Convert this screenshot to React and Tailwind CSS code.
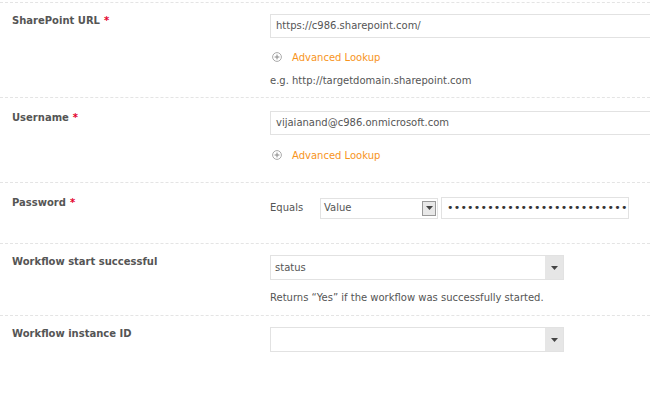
import { useState } from 'react';

const Arrow = () => (
    <svg width="7" height="4" viewBox="0 0 7 4"><path d="M0 0h7L3.5 4z" fill="#444" /></svg>
);

const Plus = () => (
    <svg width="10" height="10" viewBox="0 0 10 10" className="shrink-0 -mt-[3px]">
        <circle cx="5" cy="5" r="4.4" fill="none" stroke="#aaa" strokeWidth="1" />
        <path d="M5 2.6v4.8M2.6 5h4.8" stroke="#888" strokeWidth="1" />
    </svg>
);

const Lookup = ({ top = 'mt-[13px]' }) => (
    <div className={`flex items-center gap-[10px] pl-[2px] ${top}`}>
        <Plus />
        <span className="text-[#f7941d]">Advanced Lookup</span>
    </div>
);

const Label = ({ children, required }) => (
    <div className="w-[270px] shrink-0 pl-[12px] font-bold text-[#555]">
        {children}
        {required && <span className="text-[#e4002b] ml-[4px]">*</span>}
    </div>
);

const Select = ({ value }) => (
    <div className="w-[294px] h-[25px] flex border border-[#e2e2e2] bg-white">
        <div className="flex-1 px-[4px] flex items-center text-[#555]">{value}</div>
        <div className="w-[18px] bg-[#e6e6e6] flex items-center justify-center"><Arrow /></div>
    </div>
);

const App = () => {
    const [url] = useState('https://c986.sharepoint.com/');

    return (
        <div className="w-[650px] h-[397px] bg-white overflow-hidden text-[10px] leading-[14px] text-[#555] font-['Verdana','DejaVu_Sans',sans-serif]">
            <div className="mt-[2px] border-t border-dashed border-[#e4e4e4]" />

            {/* SharePoint URL */}
            <div className="flex pt-[11px] pb-[9px] border-b border-dashed border-[#e4e4e4]">
                <Label required>SharePoint URL</Label>
                <div className="flex-1">
                    <div className="h-[24px] -mr-[20px] border border-[#e2e2e2] flex items-center px-[5px]">{url}</div>
                    <Lookup />
                    <div className="mt-[9px]">e.g. http://targetdomain.sharepoint.com</div>
                </div>
            </div>

            {/* Username */}
            <div className="flex pt-[13px] pb-[19px] border-b border-dashed border-[#e4e4e4]">
                <Label required>Username</Label>
                <div className="flex-1">
                    <div className="h-[24px] -mr-[20px] border border-[#e2e2e2] flex items-center px-[5px]">vijaianand@c986.onmicrosoft.com</div>
                    <Lookup top="mt-[14px]" />
                </div>
            </div>

            {/* Password */}
            <div className="flex pt-[13px] pb-[24px] border-b border-dashed border-[#e4e4e4]">
                <Label required>Password</Label>
                <div className="flex items-center mt-[1px]">
                    <span className="w-[50px]">Equals</span>
                    <div className="w-[118px] h-[21px] flex items-center border border-[#e2e2e2] pl-[3px] pr-[1px]">
                        <span className="flex-1">Value</span>
                        <div className="w-[14px] h-[15px] bg-[#e8e8e8] border border-[#999] flex items-center justify-center"><Arrow /></div>
                    </div>
                    <div className="w-[188px] h-[22px] ml-[3px] border border-[#e2e2e2] flex items-center px-[5px] text-[11px] tracking-[0.2px] text-[#333] overflow-hidden">
                        {'•'.repeat(27)}
                    </div>
                </div>
            </div>

            {/* Workflow start successful */}
            <div className="flex pt-[11px] pb-[10px] border-b border-dashed border-[#e4e4e4]">
                <Label>Workflow start successful</Label>
                <div>
                    <Select value="status" />
                    <div className="mt-[11px]">Returns “Yes” if the workflow was successfully started.</div>
                </div>
            </div>

            {/* Workflow instance ID */}
            <div className="flex pt-[11px]">
                <Label>Workflow instance ID</Label>
                <Select value="" />
            </div>
        </div>
    );
};

export default App;
